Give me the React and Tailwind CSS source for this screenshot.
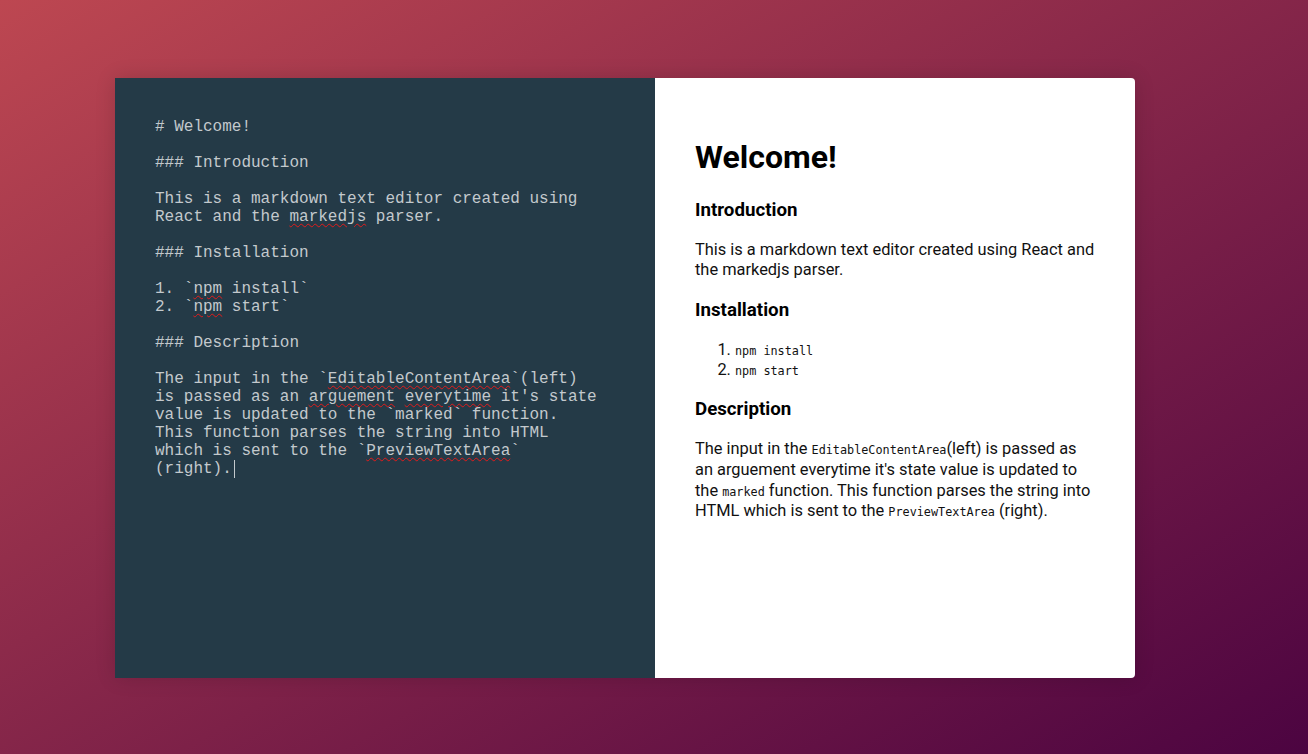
import React from "react";

const sp = "underline decoration-wavy decoration-[#e21b1b] decoration-1 underline-offset-[2px]";

function Editor() {
  const lines = [
    ["# Welcome!"],
    [""],
    ["### Introduction"],
    [""],
    ["This is a markdown text editor created using"],
    ["React and the ", { s: "markedjs" }, " parser."],
    [""],
    ["### Installation"],
    [""],
    ["1. `", { s: "npm" }, " install`"],
    ["2. `", { s: "npm" }, " start`"],
    [""],
    ["### Description"],
    [""],
    ["The input in the `", { s: "EditableContentArea" }, "`(left)"],
    ["is passed as an ", { s: "arguement" }, " ", { s: "everytime" }, " it's state"],
    ["value is updated to the `marked` function."],
    ["This function parses the string into HTML"],
    ["which is sent to the `", { s: "PreviewTextArea" }, "`"],
    ["(right).", { c: true }],
  ];
  return (
    <div className="w-[540px] h-full bg-[#243a47] pt-[40px] pl-[40px] pr-[50px] text-[#c3c9cd] text-[16px] leading-[18px] font-['Liberation_Mono',monospace]">
      {lines.map((l, i) => (
        <div key={i} className="whitespace-pre h-[18px]">
          {l.map((p, j) =>
            typeof p === "string" ? (
              <span key={j}>{p}</span>
            ) : p.s ? (
              <span key={j} className={sp}>{p.s}</span>
            ) : (
              <span key={j} className="inline-block w-px h-[18px] bg-[#c3c9cd] align-top ml-[2px]" />
            )
          )}
        </div>
      ))}
    </div>
  );
}

const code = "font-['DejaVu_Sans_Mono',monospace] text-[11.8px] leading-none";

function Preview() {
  return (
    <div className="w-[480px] h-full bg-white rounded-r-[4px] p-[40px] text-[#111] font-['Roboto',sans-serif] text-[16.4px] leading-[20px]">
      <h1 className="text-[32px] leading-[37.5px] font-bold text-black mt-[21.44px] mb-[22.5px]">Welcome!</h1>
      <h3 className="text-[18.72px] leading-[22px] font-bold text-black mb-[18.72px]">Introduction</h3>
      <p className="mb-[18.72px]">This is a markdown text editor created using React and the markedjs parser.</p>
      <h3 className="text-[18.72px] leading-[22px] font-bold text-black mb-[19.5px]">Installation</h3>
      <ol className="list-decimal pl-[40px] mb-[18px]">
        <li><code className={code}>npm install</code></li>
        <li><code className={code}>npm start</code></li>
      </ol>
      <h3 className="text-[18.72px] leading-[22px] font-bold text-black mb-[18.72px]">Description</h3>
      <p className="leading-[20.7px]">
        The input in the <code className={code}>EditableContentArea</code>(left) is passed as an arguement everytime it's state value is updated to the <code className={code}>marked</code> function. This function parses the string into HTML which is sent to the <code className={code}>PreviewTextArea</code> (right).
      </p>
    </div>
  );
}

export default function App() {
  return (
    <div className="w-[1308px] h-[754px] bg-[linear-gradient(to_bottom_right,#bd4751,#4c0441)] flex items-center pl-[115px] pt-[2px]">
      <div className="flex h-[600px] rounded-[4px] shadow-[0_0_20px_rgba(0,0,0,0.15)]">
        <Editor />
        <Preview />
      </div>
    </div>
  );
}
